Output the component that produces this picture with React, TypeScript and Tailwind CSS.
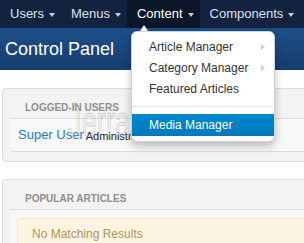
const navItems = [
  { label: 'Users', active: false },
  { label: 'Menus', active: false },
  { label: 'Content', active: true },
  { label: 'Components', active: false },
];

const menuItems = [
  { label: 'Article Manager', sub: true },
  { label: 'Category Manager', sub: true },
  { label: 'Featured Articles', sub: false },
];

function Caret() {
  return (
    <span className="mt-[2px] h-0 w-0 border-l-[3px] border-r-[3px] border-t-[4px] border-l-transparent border-r-transparent border-t-[#c8ccd4]" />
  );
}

function Panel({ title, children }: { title: string; children: React.ReactNode }) {
  return (
    <div className="ml-[2px] w-[340px] rounded-[4px] border border-[#dcdcdc] bg-[#f3f3f3] pb-[9px] pl-[7px]">
      <div className="border-b border-[#dcdcdc] pb-[4px] pl-[15px] pt-[13px] text-[10px] font-bold uppercase leading-[12px] text-[#8f8f8f]">
        {title}
      </div>
      {children}
    </div>
  );
}

export default function App() {
  return (
    <div className="relative h-[243px] w-[304px] overflow-hidden bg-white font-['Liberation_Sans',Arial,sans-serif]">
      {/* top nav */}
      <div className="flex h-[28px] items-stretch bg-[#13223e]">
        {navItems.map((item) => (
          <div
            key={item.label}
            className={`flex items-center gap-[5px] pl-[10px] pr-[6px] text-[13px] ${
              item.active ? 'bg-[#0b1628] text-white' : 'text-[#dde2ea]'
            }`}
          >
            {item.label}
            <Caret />
          </div>
        ))}
      </div>

      {/* page title */}
      <div className="flex h-[42px] items-center bg-gradient-to-b from-[#1d4f8b] to-[#173d6d] pl-[5px] text-[18px] text-white">
        Control Panel
      </div>

      <div className="pt-[18px]">
        <Panel title="Logged-in Users">
          <div className="flex h-[33px] items-center border-b border-[#dcdcdc] bg-[#f8f8f8] pl-[8px]">
            <span className="text-[13px] text-[#1b7dc1]">Super User</span>
            <span className="ml-[2px] mt-[2px] text-[11px] text-[#222]">Administrator</span>
          </div>
        </Panel>

        <div className="mt-[17px]">
          <Panel title="Popular Articles">
            <div className="bg-[#f7f7f7] pb-[12px] pl-[7px] pt-[8px]">
              <div className="rounded-[4px] border border-[#f8e6c4] bg-[#fcf5e2] pb-[8px] pl-[14px] pt-[8px] text-[12px] leading-[14px] text-[#b3935b]">
                No Matching Results
              </div>
            </div>
          </Panel>
        </div>
      </div>

      {/* watermark */}
      <div className="pointer-events-none absolute left-[68px] top-[100px] origin-left scale-x-[0.62] whitespace-nowrap text-[44px] leading-[44px] text-[rgba(215,215,215,0.25)] [-webkit-text-stroke:1px_rgba(120,120,120,0.28)]">
        JerrasMedia
      </div>

      {/* dropdown */}
      <div className="absolute left-[140px] top-[25px] h-0 w-0 border-b-[6px] border-l-[4px] border-r-[4px] border-b-white border-l-transparent border-r-transparent" />
      <div className="absolute left-[131px] top-[31px] w-[144px] rounded-[6px] border border-[rgba(0,0,0,0.18)] bg-white pb-[5px] pt-[4px] shadow-[0_4px_9px_rgba(0,0,0,0.25)]">
        {menuItems.map((m) => (
          <div
            key={m.label}
            className="flex h-[21px] items-center justify-between pl-[17px] pr-[9px] text-[12px] text-[#333]"
          >
            {m.label}
            {m.sub && (
              <span className="h-0 w-0 border-b-[3px] border-l-[4px] border-t-[3px] border-b-transparent border-l-[#cfcfcf] border-t-transparent" />
            )}
          </div>
        ))}
        <div className="my-[7px] h-px bg-[#e2e2e2]" />
        <div className="flex h-[22px] items-center bg-gradient-to-b from-[#0088cc] to-[#0079bb] pl-[17px] text-[12px] text-white">
          Media Manager
        </div>
      </div>
    </div>
  );
}
